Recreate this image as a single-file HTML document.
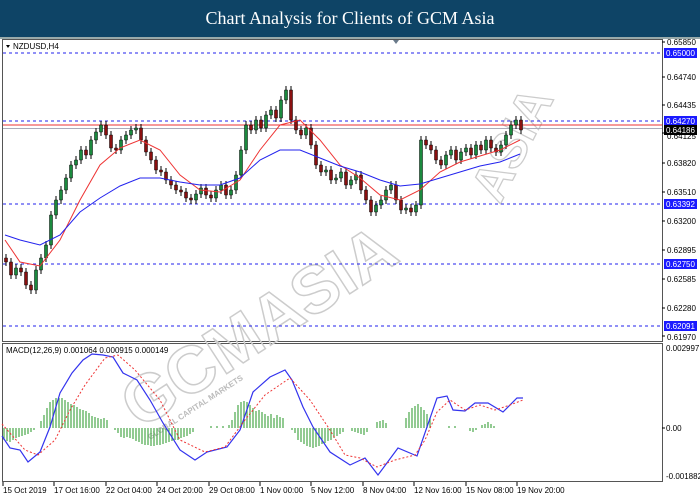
<!DOCTYPE html>
<html><head><meta charset="utf-8"><style>
html,body{margin:0;padding:0;width:700px;height:500px;overflow:hidden;background:#fff}
#t{position:absolute;left:0;top:0;width:700px;height:37px;background:#0e4466;color:#fff;font-family:"Liberation Serif",serif;font-size:18px;text-align:center;line-height:37px;border-bottom:2px solid #9aa}
svg{position:absolute;left:0;top:0}
text{font-family:"Liberation Sans",sans-serif;font-size:8px;fill:#000}
.w{fill:#fff}
</style></head><body>
<div id="t">Chart Analysis for Clients of GCM Asia</div>
<svg width="700" height="500" viewBox="0 0 700 500">
<rect x="2.5" y="39.5" width="660" height="302" fill="#fff" stroke="#555"/>
<rect x="2.5" y="343.5" width="660" height="138" fill="#fff" stroke="#555"/>
<text transform="translate(140,430) rotate(-33)" style="font-size:66px;font-weight:bold;fill:none;stroke:#ccc;stroke-width:1.5">GCMASIA</text>
<text transform="translate(150,440) rotate(-33)" style="font-size:8px;fill:#bbb;font-weight:bold">GLOBAL CAPITAL MARKETS</text>
<text transform="translate(500,205) rotate(-63)" style="font-size:50px;font-weight:bold;fill:none;stroke:#ccc;stroke-width:1.3">ASIA</text>
<g stroke="#2222ee" stroke-dasharray="3,3">
<line x1="3" x2="662" y1="53" y2="53"/><line x1="3" x2="662" y1="121" y2="121"/><line x1="3" x2="662" y1="204" y2="204"/><line x1="3" x2="662" y1="264" y2="264"/><line x1="3" x2="662" y1="326" y2="326"/>
</g>
<line x1="3" x2="662" y1="125" y2="125" stroke="#e33"/>
<line x1="3" x2="662" y1="128.5" y2="128.5" stroke="#aab"/>
<path stroke="#000" fill="none" d="M6,254V266M11,258V279M16,264V279M21,264V276M26,268V289M31,281V294M36,266V294M41,254V274M46,241V262M51,211V249M56,196V219M61,186V204M66,174V194M71,161V182M76,156V169M81,146V164M86,146V159M91,136V159M96,128V144M101,121V136M106,121V139M111,131V152M116,144V154M121,136V154M126,131V144M131,126V139M136,124V134M141,124V144M146,136V156M151,148V164M156,156V174M161,166V176M166,168V184M171,176V189M176,181V194M181,186V196M186,188V202M191,194V204M196,190V204M201,184V198M206,184V199M211,191V202M216,186V202M221,181V194M226,181V199M231,186V199M236,171V194M241,146V179M246,121V154M251,121V134M256,116V134M261,116V132M266,111V132M271,106V119M276,106V122M281,96V122M286,86V104M291,86V124M296,116V134M301,126V139M306,124V139M311,124V149M316,141V169M321,161V176M326,166V176M331,166V184M336,174V184M341,168V182M346,168V189M351,176V189M356,171V184M361,171V194M366,186V204M371,196V216M376,201V216M381,196V209M386,186V204M391,181V194M396,181V204M401,196V214M406,204V214M411,204V216M416,201V216M421,136V209M426,136V149M431,141V154M436,146V164M441,156V169M446,151V169M451,146V159M456,146V164M461,148V164M466,144V156M471,144V159M476,141V159M481,141V154M486,136V154M491,136V152M496,144V156M501,141V156M506,131V149M511,121V139M516,116V129M521,116V134"/>
<path fill="#8a1010" stroke="#000" stroke-width="0.5" d="M4.5,258h3v4h-3zM9.5,262h3v13h-3zM19.5,268h3v4h-3zM24.5,272h3v13h-3zM29.5,285h3v5h-3zM84.5,150h3v5h-3zM104.5,125h3v10h-3zM109.5,135h3v13h-3zM114.5,148h3v2h-3zM139.5,128h3v12h-3zM144.5,140h3v12h-3zM149.5,152h3v8h-3zM154.5,160h3v10h-3zM159.5,170h3v2h-3zM164.5,172h3v8h-3zM169.5,180h3v5h-3zM174.5,185h3v5h-3zM179.5,190h3v2h-3zM184.5,192h3v6h-3zM189.5,198h3v2h-3zM204.5,188h3v7h-3zM209.5,195h3v3h-3zM224.5,185h3v10h-3zM249.5,125h3v5h-3zM259.5,120h3v8h-3zM274.5,110h3v8h-3zM289.5,90h3v30h-3zM294.5,120h3v10h-3zM299.5,130h3v5h-3zM309.5,128h3v17h-3zM314.5,145h3v20h-3zM319.5,165h3v7h-3zM329.5,170h3v10h-3zM344.5,172h3v13h-3zM359.5,175h3v15h-3zM364.5,190h3v10h-3zM369.5,200h3v12h-3zM394.5,185h3v15h-3zM399.5,200h3v10h-3zM409.5,208h3v4h-3zM424.5,140h3v5h-3zM429.5,145h3v5h-3zM434.5,150h3v10h-3zM439.5,160h3v5h-3zM454.5,150h3v10h-3zM469.5,148h3v7h-3zM479.5,145h3v5h-3zM489.5,140h3v8h-3zM494.5,148h3v4h-3zM519.5,120h3v10h-3z"/>
<path fill="#1b8a3e" stroke="#000" stroke-width="0.5" d="M14.5,268h3v7h-3zM34.5,270h3v20h-3zM39.5,258h3v12h-3zM44.5,245h3v13h-3zM49.5,215h3v30h-3zM54.5,200h3v15h-3zM59.5,190h3v10h-3zM64.5,178h3v12h-3zM69.5,165h3v13h-3zM74.5,160h3v5h-3zM79.5,150h3v10h-3zM89.5,140h3v15h-3zM94.5,132h3v8h-3zM99.5,125h3v7h-3zM119.5,140h3v10h-3zM124.5,135h3v5h-3zM129.5,130h3v5h-3zM134.5,128h3v2h-3zM194.5,194h3v6h-3zM199.5,188h3v6h-3zM214.5,190h3v8h-3zM219.5,185h3v5h-3zM229.5,190h3v5h-3zM234.5,175h3v15h-3zM239.5,150h3v25h-3zM244.5,125h3v25h-3zM254.5,120h3v10h-3zM264.5,115h3v13h-3zM269.5,110h3v5h-3zM279.5,100h3v18h-3zM284.5,90h3v10h-3zM304.5,128h3v7h-3zM324.5,170h3v2h-3zM334.5,178h3v2h-3zM339.5,172h3v6h-3zM349.5,180h3v5h-3zM354.5,175h3v5h-3zM374.5,205h3v7h-3zM379.5,200h3v5h-3zM384.5,190h3v10h-3zM389.5,185h3v5h-3zM404.5,208h3v2h-3zM414.5,205h3v7h-3zM419.5,140h3v65h-3zM444.5,155h3v10h-3zM449.5,150h3v5h-3zM459.5,152h3v8h-3zM464.5,148h3v4h-3zM474.5,145h3v10h-3zM484.5,140h3v10h-3zM499.5,145h3v7h-3zM504.5,135h3v10h-3zM509.5,125h3v10h-3zM514.5,120h3v5h-3z"/>
<polyline fill="none" stroke="#e33" points="5,240 20,262 40,266 60,240 80,200 100,165 120,148 140,140 160,150 180,175 200,190 220,192 240,180 260,150 280,125 300,120 320,140 340,165 360,178 380,195 400,200 420,190 440,172 460,162 480,156 500,150 520,140"/>
<polyline fill="none" stroke="#2222ee" points="5,235 20,240 40,245 60,235 80,212 100,198 120,186 140,178 160,178 180,182 200,185 220,185 240,178 260,160 280,150 300,150 320,158 340,166 360,172 380,180 400,186 420,184 440,178 460,172 480,166 500,162 520,154"/>
<path stroke="#4aa84a" stroke-width="1.2" fill="none" d="M4,428V440M7,428V441M10,428V442M13,428V440M16,428V438M19,428V437M22,428V436M25,428V435M28,428V434M31,428V432M34,428V430M41,428V421M44,428V415M47,428V408M50,428V402M53,428V400M56,428V398M59,428V398M62,428V398M65,428V400M68,428V402M71,428V404M74,428V405M77,428V407M80,428V409M83,428V410M86,428V411M89,428V413M92,428V416M95,428V417M98,428V418M101,428V419M104,428V418M107,428V420M115,428V430M118,428V433M121,428V437M124,428V438M127,428V437M130,428V438M133,428V439M136,428V441M139,428V442M142,428V444M145,428V445M148,428V445M151,428V446M154,428V446M157,428V445M160,428V445M163,428V444M166,428V443M169,428V442M172,428V441M175,428V440M178,428V440M181,428V438M184,428V437M187,428V436M190,428V434M193,428V432M211,428V426M217,428V426M223,428V426M229,428V425M232,428V420M235,428V412M238,428V405M241,428V402M244,428V401M247,428V402M250,428V405M253,428V408M256,428V411M259,428V410M262,428V412M265,428V414M268,428V416M271,428V414M274,428V418M277,428V415M280,428V417M283,428V418M292,428V430M295,428V433M298,428V440M301,428V442M304,428V444M307,428V446M310,428V447M313,428V448M316,428V447M319,428V446M322,428V444M325,428V443M328,428V441M331,428V440M334,428V438M337,428V436M340,428V434M343,428V432M352,428V431M355,428V432M358,428V433M361,428V434M364,428V435M367,428V432M377,428V422M380,428V421M383,428V420M386,428V423M406,428V418M409,428V412M412,428V408M415,428V406M418,428V404M421,428V407M424,428V410M427,428V414M430,428V418M449,428V426M455,428V426M470,428V431M473,428V432M476,428V430M482,428V425M485,428V424M488,428V422M491,428V424M494,428V426"/>
<polyline fill="none" stroke="#3333ee" stroke-width="1.2" points="2,436 10,448 20,450 28,462 40,452 50,427 60,393 72,373 83,360 92,354 103,355 113,357 123,373 137,380 150,400 163,423 180,450 195,460 207,452 227,447 240,430 253,392 270,377 285,370 292,380 303,407 313,427 330,452 347,463 350,465 365,458 378,475 398,448 417,456 437,398 447,396 453,410 465,411 475,403 488,403 503,412 517,398 523,398"/>
<polyline fill="none" stroke="#e33" stroke-dasharray="2,2" points="2,424 25,450 38,455 55,440 70,410 85,385 105,358 118,355 135,370 160,400 180,440 205,452 225,447 245,420 265,395 290,378 310,400 330,430 345,455 360,458 377,467 395,460 415,455 425,440 437,412 450,400 465,410 480,405 495,410 510,405 523,400"/>
<path d="M6,45 L10,45 L8,48Z" fill="#000"/><text x="13" y="49">NZDUSD,H4</text>
<path d="M393,40 L399,40 L396,44Z" fill="#6a7a8a"/>
<text x="6" y="353">MACD(12,26,9) 0.001064 0.000915 0.000149</text>
<g stroke="#000"><line x1="662" x2="665" y1="42" y2="42"/><line x1="662" x2="665" y1="77" y2="77"/><line x1="662" x2="665" y1="105" y2="105"/><line x1="662" x2="665" y1="133" y2="133"/><line x1="662" x2="665" y1="163" y2="163"/><line x1="662" x2="665" y1="192" y2="192"/><line x1="662" x2="665" y1="221" y2="221"/><line x1="662" x2="665" y1="250" y2="250"/><line x1="662" x2="665" y1="279" y2="279"/><line x1="662" x2="665" y1="308" y2="308"/><line x1="662" x2="665" y1="336" y2="336"/><line x1="662" x2="665" y1="428" y2="428"/></g>
<text x="667" y="45">0.65850</text><text x="667" y="80">0.64740</text><text x="667" y="108">0.64435</text><text x="667" y="139">0.64125</text><text x="667" y="166">0.63820</text><text x="667" y="195">0.63510</text><text x="667" y="224">0.63200</text><text x="667" y="253">0.62895</text><text x="667" y="282">0.62585</text><text x="667" y="311">0.62280</text><text x="667" y="340">0.61970</text>
<rect x="664" y="48" width="33" height="10" fill="#1a1aff"/><text x="666" y="56" class="w">0.65000</text>
<rect x="664" y="116" width="33" height="10" fill="#1a1aff"/><text x="666" y="124" class="w">0.64270</text>
<rect x="664" y="125" width="33" height="10" fill="#000"/><text x="666" y="133" class="w">0.64186</text>
<rect x="664" y="199" width="33" height="10" fill="#1a1aff"/><text x="666" y="207" class="w">0.63392</text>
<rect x="664" y="259" width="33" height="10" fill="#1a1aff"/><text x="666" y="267" class="w">0.62750</text>
<rect x="664" y="321" width="33" height="10" fill="#1a1aff"/><text x="666" y="329" class="w">0.62091</text>
<text x="666" y="351">0.002997</text><text x="666" y="431">0.00</text><text x="666" y="479">-0.001882</text>
<g stroke="#000"><line x1="3" x2="3" y1="482" y2="486"/><line x1="54" x2="54" y1="482" y2="486"/><line x1="106" x2="106" y1="482" y2="486"/><line x1="157" x2="157" y1="482" y2="486"/><line x1="209" x2="209" y1="482" y2="486"/><line x1="260" x2="260" y1="482" y2="486"/><line x1="311" x2="311" y1="482" y2="486"/><line x1="363" x2="363" y1="482" y2="486"/><line x1="414" x2="414" y1="482" y2="486"/><line x1="466" x2="466" y1="482" y2="486"/><line x1="517" x2="517" y1="482" y2="486"/></g>
<text x="3" y="493">15 Oct 2019</text><text x="54" y="493">17 Oct 16:00</text><text x="106" y="493">22 Oct 04:00</text><text x="157" y="493">24 Oct 20:00</text><text x="209" y="493">29 Oct 08:00</text><text x="260" y="493">1 Nov 00:00</text><text x="311" y="493">5 Nov 12:00</text><text x="363" y="493">8 Nov 04:00</text><text x="414" y="493">12 Nov 16:00</text><text x="466" y="493">15 Nov 08:00</text><text x="517" y="493">19 Nov 20:00</text>
</svg>
</body></html>
